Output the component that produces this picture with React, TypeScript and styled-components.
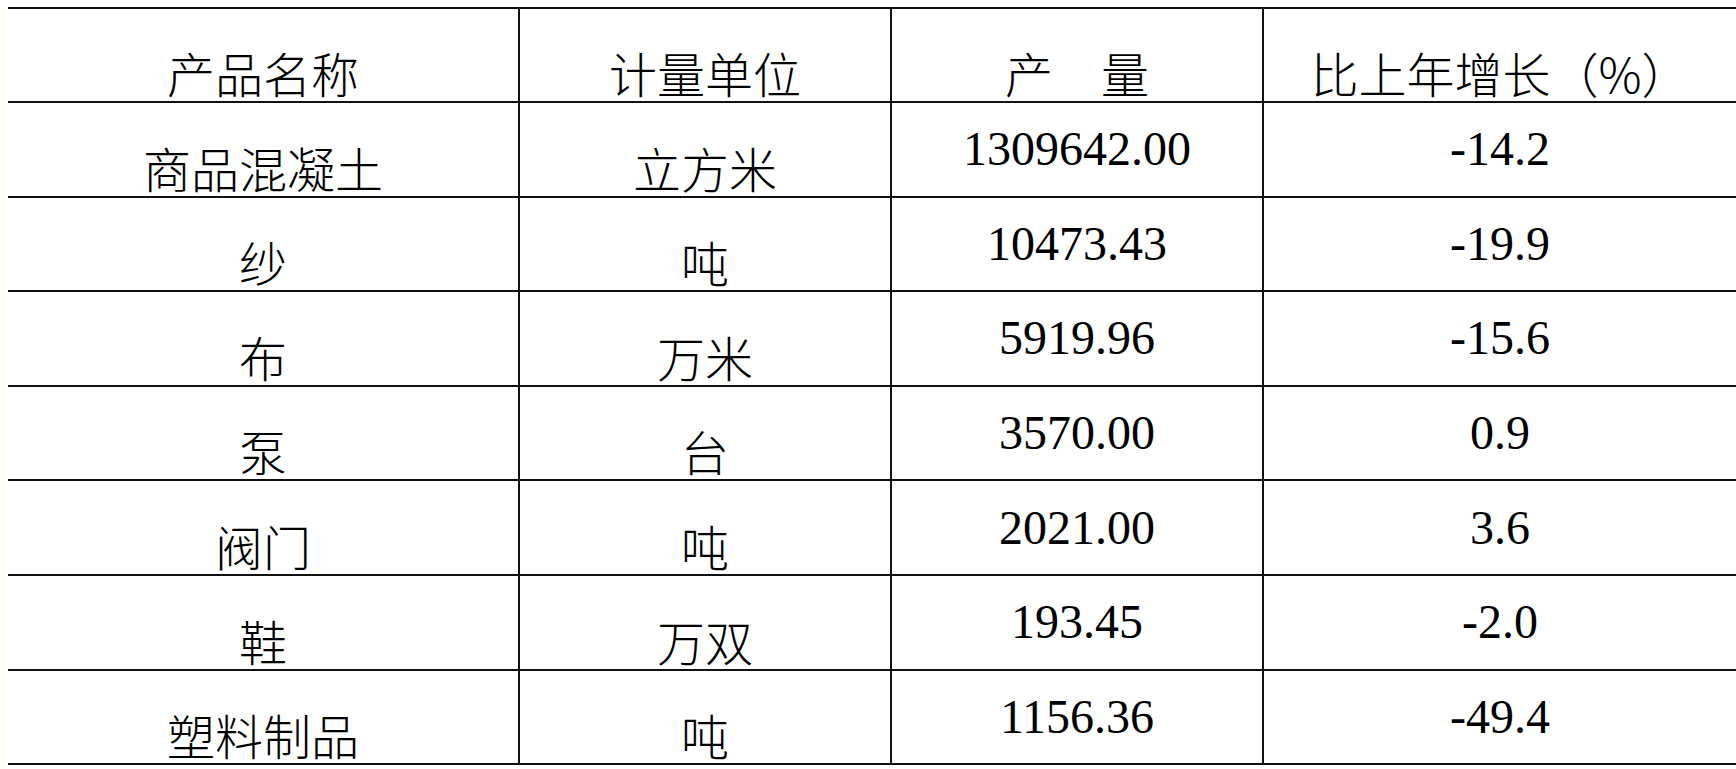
import React, { FunctionComponent } from 'react';
import styled, { createGlobalStyle } from 'styled-components';

const GlobalStyle = createGlobalStyle`
  html, body {
    margin: 0;
    padding: 0;
    background: #ffffff;
  }
  body {
    font-family: 'Noto Sans CJK SC', 'Noto Sans', sans-serif;
    color: #000000;
  }
`;

const LINE = '#111111';
const CJK = "'Noto Sans CJK SC', 'Noto Sans CJK JP', sans-serif";
const NUM = "'Liberation Serif', 'Noto Sans CJK SC', serif";

const Page = styled.div`
  display: flex;
  align-items: stretch;
  width: 1736px;
  height: 769px;
  padding: 7px 0 0 2px;
  box-sizing: border-box;
  overflow: hidden;
`;

const Gutter = styled.div`
  width: 1px;
  margin-top: 1px;
  margin-right: 5px;
  background: #ffffc4;
`;

const Sheet = styled.div`
  flex: 1;
  display: grid;
  grid-template-columns: 512px 372px 372px 1fr;
  grid-template-rows: 94px;
  grid-auto-rows: 94.6px;
  align-content: start;
  border-top: 2px solid ${LINE};
`;

const Cell = styled.div<{ $kind: 'text' | 'num'; $last?: boolean }>`
  display: flex;
  justify-content: center;
  align-items: ${({ $kind }) => ($kind === 'num' ? 'center' : 'flex-end')};
  padding-bottom: ${({ $kind }) => ($kind === 'num' ? '0' : '5px')};
  box-sizing: border-box;
  border-bottom: 2px solid ${LINE};
  border-right: ${({ $last }) => ($last ? 'none' : `2px solid ${LINE}`)};
  font-family: ${({ $kind }) => ($kind === 'num' ? NUM : CJK)};
  font-weight: ${({ $kind }) => ($kind === 'num' ? 400 : 300)};
  font-size: 48px;
  line-height: 48px;
  white-space: pre;
`;

interface Row {
  name: string;
  unit: string;
  output: string;
  growth: string;
}

const HEADERS = ['产品名称', '计量单位', '产　量', '比上年增长（%）'];

const ROWS: Row[] = [
  { name: '商品混凝土', unit: '立方米', output: '1309642.00', growth: '-14.2' },
  { name: '纱', unit: '吨', output: '10473.43', growth: '-19.9' },
  { name: '布', unit: '万米', output: '5919.96', growth: '-15.6' },
  { name: '泵', unit: '台', output: '3570.00', growth: '0.9' },
  { name: '阀门', unit: '吨', output: '2021.00', growth: '3.6' },
  { name: '鞋', unit: '万双', output: '193.45', growth: '-2.0' },
  { name: '塑料制品', unit: '吨', output: '1156.36', growth: '-49.4' },
];

const App: FunctionComponent = () => {
  return (
    <>
      <GlobalStyle />
      <Page>
        <Gutter />
        <Sheet>
          {HEADERS.map((h, i) => (
            <Cell key={h} $kind="text" $last={i === HEADERS.length - 1}>
              {h}
            </Cell>
          ))}
          {ROWS.map((row) => (
            <React.Fragment key={row.name}>
              <Cell $kind="text">{row.name}</Cell>
              <Cell $kind="text">{row.unit}</Cell>
              <Cell $kind="num">{row.output}</Cell>
              <Cell $kind="num" $last>
                {row.growth}
              </Cell>
            </React.Fragment>
          ))}
        </Sheet>
      </Page>
    </>
  );
};

export default App;
